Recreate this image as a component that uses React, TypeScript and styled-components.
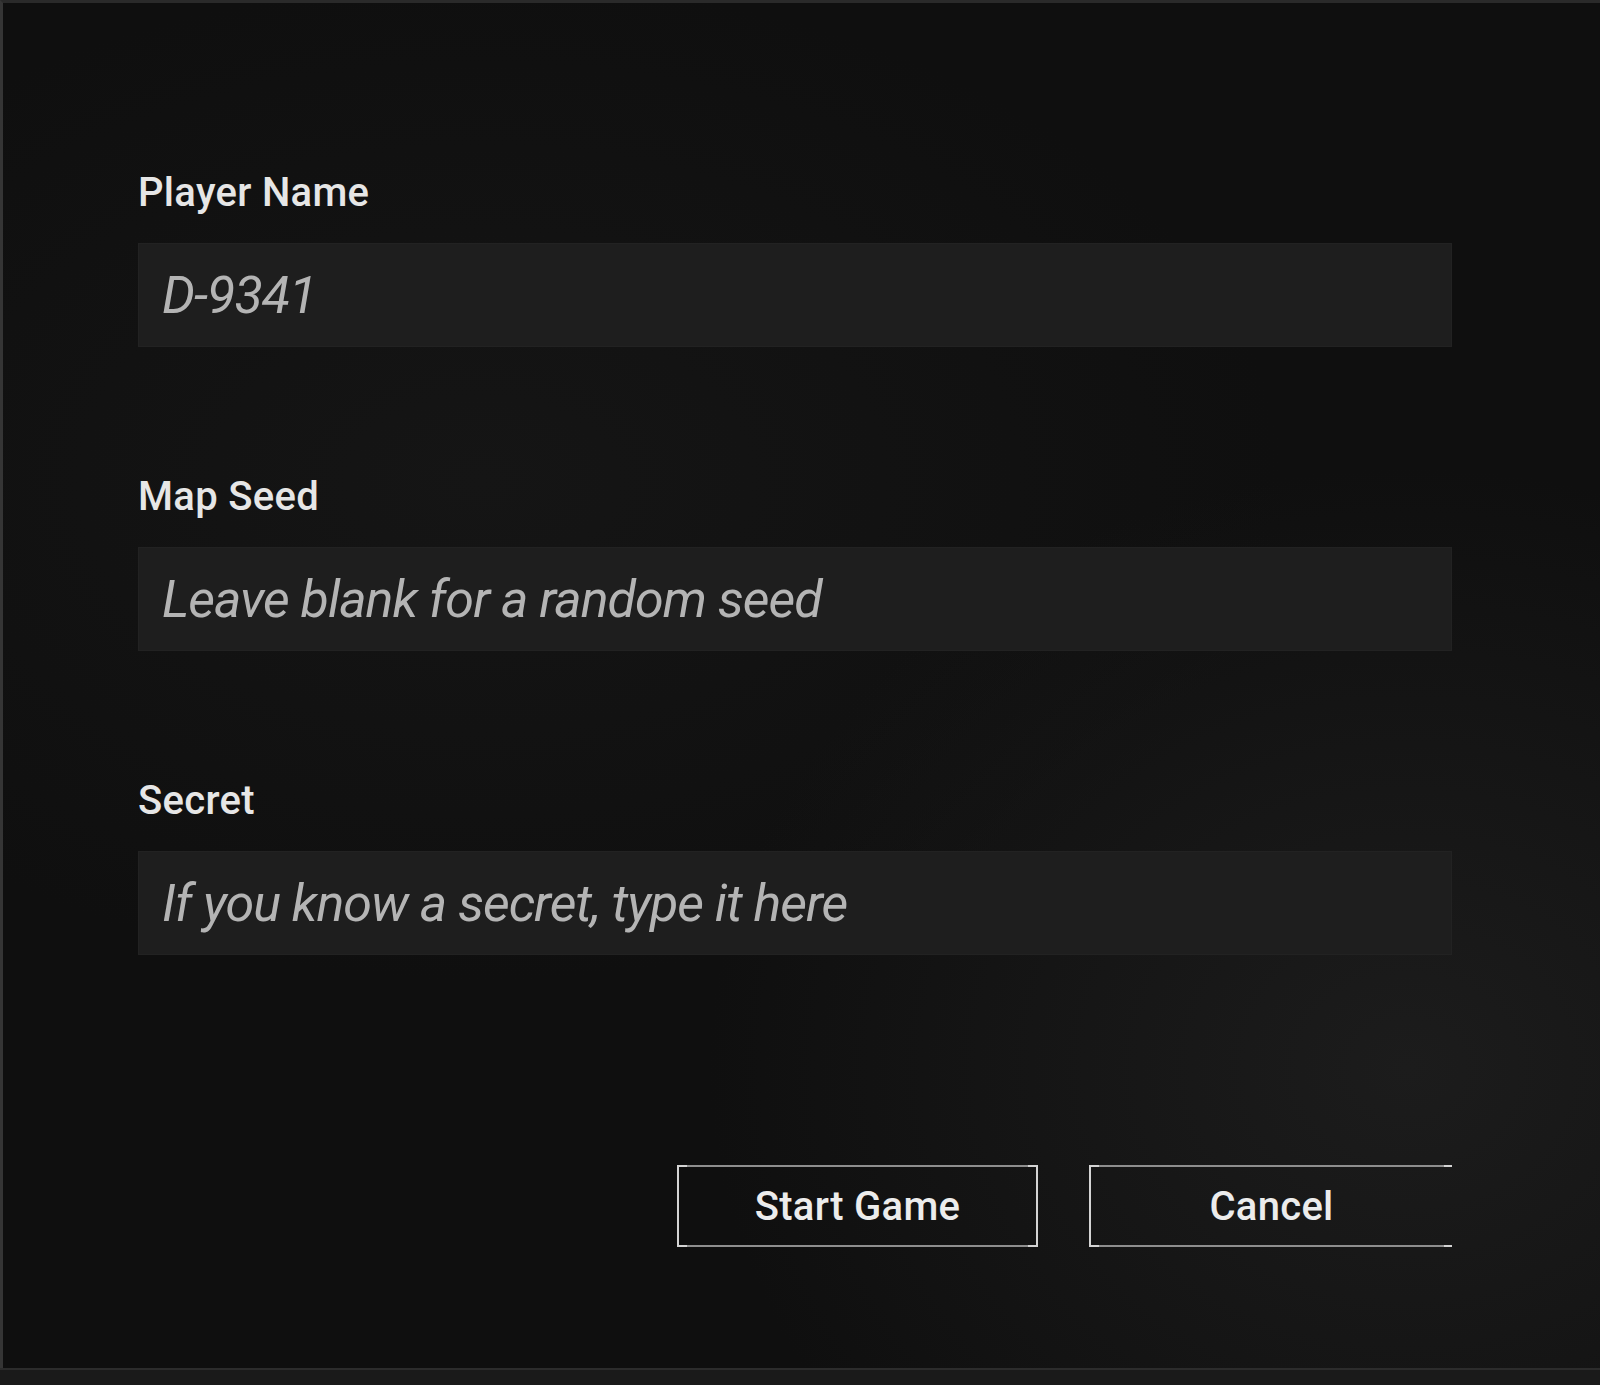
import React from "react";
import styled, { createGlobalStyle, css } from "styled-components";

const GlobalStyle = createGlobalStyle`
  html, body {
    margin: 0;
    padding: 0;
    background: #181818;
  }
  * { box-sizing: border-box; }
`;

const Screen = styled.div`
  width: 1600px;
  height: 1385px;
  display: flex;
  flex-direction: column;
  overflow: hidden;
  font-family: "Roboto", "Liberation Sans", sans-serif;
`;

const Dialog = styled.div`
  flex: 1;
  display: flex;
  flex-direction: column;
  padding: 170px 0 0 135px;
  border-top: 3px solid #2a2a2a;
  border-left: 3px solid #353535;
  background:
    radial-gradient(ellipse 700px 600px at 88% 78%, #1c1c1c 0%, rgba(28,28,28,0) 100%),
    radial-gradient(ellipse 800px 500px at 30% 35%, #151515 0%, rgba(21,21,21,0) 100%),
    #0f0f0f;
`;

const BottomBar = styled.div`
  height: 17px;
  flex: none;
  background: #1a1a1a;
  border-top: 2px solid #2c2c2c;
`;

const Form = styled.div`
  width: 1314px;
  display: flex;
  flex-direction: column;
  gap: 130px;
`;

const Field = styled.label`
  display: flex;
  flex-direction: column;
  gap: 30px;
`;

const Label = styled.span`
  font-size: 40px;
  line-height: 40px;
  font-weight: 500;
  color: #e6e6e6;
  letter-spacing: 0.3px;
`;

const Input = styled.input`
  height: 104px;
  width: 100%;
  border: none;
  outline: none;
  background: #1e1e1e;
  padding: 0 24px;
  font-family: inherit;
  font-size: 52px;
  font-style: italic;
  color: #bdbdbd;
  letter-spacing: -1px;
  box-shadow: inset 0 0 0 1px #222;
  &::placeholder {
    color: #b4b4b4;
    opacity: 1;
  }
`;

const Actions = styled.div`
  width: 1314px;
  margin-top: 210px;
  display: flex;
  justify-content: flex-end;
  gap: 51px;
`;

const Button = styled.button<{ $open?: boolean }>`
  position: relative;
  height: 82px;
  width: ${(p) => (p.$open ? "363px" : "361px")};
  background: transparent;
  border: 2px solid #8e8e8e;
  ${(p) =>
    p.$open &&
    css`
      border-right: none;
    `}
  color: #ececec;
  font-family: inherit;
  font-size: 40px;
  font-weight: 500;
  letter-spacing: 0.3px;
  padding: 0;
  cursor: pointer;

  &::before,
  &::after {
    content: "";
    position: absolute;
    top: -2px;
    bottom: -2px;
    width: 8px;
    border-top: 2px solid #d4d4d4;
    border-bottom: 2px solid #d4d4d4;
  }
  &::before {
    left: -2px;
    border-left: 2px solid #d4d4d4;
  }
  &::after {
    right: ${(p) => (p.$open ? "0" : "-2px")};
    ${(p) =>
      !p.$open &&
      css`
        border-right: 2px solid #d4d4d4;
      `}
  }
`;

export default function App() {
  return (
    <>
      <GlobalStyle />
      <Screen>
        <Dialog>
          <Form>
            <Field>
              <Label>Player Name</Label>
              <Input placeholder="D-9341" />
            </Field>
            <Field>
              <Label>Map Seed</Label>
              <Input placeholder="Leave blank for a random seed" />
            </Field>
            <Field>
              <Label>Secret</Label>
              <Input placeholder="If you know a secret, type it here" />
            </Field>
          </Form>
          <Actions>
            <Button>Start Game</Button>
            <Button $open>Cancel</Button>
          </Actions>
        </Dialog>
        <BottomBar />
      </Screen>
    </>
  );
}
